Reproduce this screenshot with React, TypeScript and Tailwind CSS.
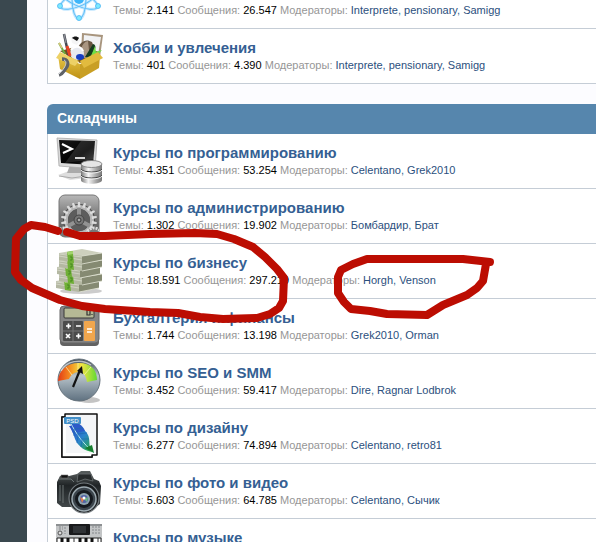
import React from "react";

type Forum = {
  title: string;
  topics: string;
  posts: string;
  mods: string[];
  icon: React.ReactNode;
};

const AtomIcon = () => (
  <svg viewBox="0 0 48 48" className="h-12 w-12" fill="none" aria-hidden="true">
    <g stroke="#c3e8ff" strokeWidth="3">
      <ellipse cx="24" cy="22" rx="7" ry="20" />
      <ellipse cx="24" cy="22" rx="7" ry="20" transform="rotate(66 24 22)" />
      <ellipse cx="24" cy="22" rx="7" ry="20" transform="rotate(-66 24 22)" />
    </g>
    <g stroke="#5cbcf7" strokeWidth="1">
      <ellipse cx="24" cy="22" rx="7" ry="20" />
      <ellipse cx="24" cy="22" rx="7" ry="20" transform="rotate(66 24 22)" />
      <ellipse cx="24" cy="22" rx="7" ry="20" transform="rotate(-66 24 22)" />
    </g>
    <circle cx="24" cy="22" r="5" fill="#3fb6fa" />
    <g fill="#7deaff" stroke="#4ab4f2" strokeWidth="0.8">
      <circle cx="24" cy="41" r="2.5" />
      <circle cx="5" cy="29" r="2.5" />
      <circle cx="43" cy="29" r="2.5" />
    </g>
  </svg>
);

const BoxIcon = () => (
  <svg viewBox="0 0 48 48" className="h-12 w-12" aria-hidden="true">
    <defs>
      <linearGradient id="boxFront" x1="0" y1="0" x2="0" y2="1">
        <stop offset="0" stopColor="#e9c94a" />
        <stop offset="1" stopColor="#bd8f13" />
      </linearGradient>
    </defs>
    <path d="M27 1 48 3 45 25 26 23z" fill="#a8957e" />
    <path d="M29 3 46 5 43 23 28 21z" fill="#f1f2f4" />
    <path d="M5 19 24 14 44 20 25 31z" fill="#76541b" />
    <path d="M23 17c1-7 8-11 14-7l2 5-12 10z" fill="#685642" />
    <path d="M33 9c-7 1-9 12-4 17l6 1z" fill="#a99580" />
    <path d="M30 25 38 12c2 0 3 3 2 5l-6 9z" fill="#163d20" />
    <path d="M36 24 40 14l1 6 6-2-7 8z" fill="#6ee047" />
    <circle cx="22" cy="21" r="7" fill="#e7e9ef" />
    <path d="M16 18c3-5 10-4 12 1" fill="none" stroke="#fff" strokeWidth="2" />
    <ellipse cx="25" cy="25" rx="4" ry="3" fill="#173dc1" />
    <path d="M16 6c2-3 6-3 8 0l1 3-3 4-5-2z" fill="#f5f5f5" />
    <path d="M17 6c2-2 5-2 7 0l-2 3z" fill="#151515" />
    <path d="M9 2 14 25" stroke="#434750" strokeWidth="2.5" />
    <path d="M9 2 11 11" stroke="#8a8d94" strokeWidth="1.2" />
    <path d="M12 14 15 24" stroke="#e94222" strokeWidth="3" />
    <path d="M4 11 10 22" stroke="#6bae45" strokeWidth="2" />
    <path d="M4 11 7 16" stroke="#dbc37b" strokeWidth="1.5" />
    <path d="M3 23 25 32 25 47 5 37z" fill="url(#boxFront)" />
    <path d="M25 32 45 24 44 36 25 47z" fill="#c99f24" />
    <path d="M1 26 5 20 24 29 20 34z" fill="#edd166" />
    <path d="M25 29 43 20 48 26 29 36z" fill="#e2bb3e" />
    <path d="M7 27c6 0 7 5 4 9s-3 6-7 7" fill="none" stroke="#5f6267" strokeWidth="3.5" />
    <path d="M9 28c3 1 2 5 0 8s-3 4-5 6" fill="none" stroke="#d1d3d5" strokeWidth="1" />
  </svg>
);

const TerminalIcon = () => (
  <svg viewBox="0 0 48 48" className="h-12 w-12" aria-hidden="true">
    <defs>
      <linearGradient id="dbMetal">
        <stop offset="0" stopColor="#777" />
        <stop offset="0.35" stopColor="#f6f6f6" />
        <stop offset="0.7" stopColor="#aaa" />
        <stop offset="1" stopColor="#777" />
      </linearGradient>
      <linearGradient id="termScreen" x1="0" y1="0" x2="1" y2="1">
        <stop offset="0.2" stopColor="#111" />
        <stop offset="0.6" stopColor="#000" />
        <stop offset="1" stopColor="#333" />
      </linearGradient>
    </defs>
    <path d="M3 38 17 33 31 34 32 41 15 43z" fill="#ddd" />
    <path d="M4 39 17 41 31 39" fill="none" stroke="#aaa" />
    <path d="M15 28h12l2 8H12z" fill="#aaa" />
    <path d="M2 1 42 3 40 32 4 29z" fill="#d9d9d9" stroke="#aaa" strokeWidth="0.8" />
    <path d="M4 3 40 4 38 28 6 26z" fill="url(#termScreen)" />
    <path d="M26 4 40 4 39 22 10 26z" fill="#fff" opacity="0.12" />
    <path d="m7 7 10 5-9 4" fill="none" stroke="#fff" strokeWidth="2" />
    <path d="M20 21h10" stroke="#fff" strokeWidth="1.6" />
    <path d="M26 27v16c0 5 21 5 21 0V27z" fill="url(#dbMetal)" />
    <path d="M26 32c2 4 19 4 21 0M26 38c2 4 19 4 21 0" fill="none" stroke="#444" />
    <path d="M26 33c2 4 19 4 21 0M26 39c2 4 19 4 21 0" fill="none" stroke="#fff" strokeWidth="0.8" />
    <ellipse cx="36.5" cy="27" rx="10.5" ry="3.5" fill="#e5e5e5" stroke="#777" strokeWidth="0.8" />
  </svg>
);

const teeth = [0, 20, 40, 60, 80, 100, 120, 140, 160, 180, 200, 220, 240, 260, 280, 300, 320, 340];

const GearIcon = () => (
  <svg viewBox="0 0 48 48" className="h-12 w-12" aria-hidden="true">
    <defs>
      <linearGradient id="gearBg" x1="0" y1="0" x2="0" y2="1">
        <stop offset="0" stopColor="#b8b8b8" />
        <stop offset="0.5" stopColor="#777" />
        <stop offset="1" stopColor="#555" />
      </linearGradient>
      <clipPath id="gearClip">
        <rect x="4" y="3" width="40" height="42" rx="6" />
      </clipPath>
    </defs>
    <rect x="4" y="3" width="40" height="42" rx="6" fill="url(#gearBg)" stroke="#777" />
    <g clipPath="url(#gearClip)">
      <circle cx="24" cy="28" r="16" fill="#4a4a4a" />
      <circle cx="24" cy="28" r="13" fill="none" stroke="#b5b5b5" strokeWidth="4" />
      {teeth.map((a) => (
        <path key={a} d="M22.5 15 23 10h2l.5 5z" fill="#dcdcdc" transform={`rotate(${a} 24 28)`} />
      ))}
      <circle cx="24" cy="28" r="11" fill="#5c5c5c" />
      <path d="M24 28V16M24 28 13 34M24 28 35 34" stroke="#929292" strokeWidth="4" />
      <circle cx="24" cy="28" r="5" fill="#777" stroke="#444" />
      <circle cx="24" cy="28" r="2" fill="#aaa" stroke="#333" />
      <g fill="#777" stroke="#ddd" strokeWidth="3">
        <circle cx="9" cy="44" r="8" strokeDasharray="2 1" />
        <circle cx="39" cy="44" r="8" strokeDasharray="2 1" />
      </g>
    </g>
  </svg>
);

const bundles = [
  { x: 0, y: 30 },
  { x: 3, y: 23 },
  { x: 1, y: 16 },
  { x: 3, y: 9 },
  { x: 3, y: 2 },
];

const MoneyIcon = () => (
  <svg viewBox="0 0 48 48" className="h-12 w-12" aria-hidden="true">
    <ellipse cx="26" cy="44" rx="21" ry="3" fill="#ccc" />
    {bundles.map(({ x, y }) => (
      <g key={y} transform={`translate(${x} ${y})`}>
        <path d="M1 4 24 0 44 4 24 8z" fill="#cdd0bd" />
        <path d="M1 4 24 7v8L1 11z" fill="#b4b8a2" />
        <path d="M1 5 24 8M1 7l23 4" stroke="#d8dacb" strokeWidth="0.8" fill="none" />
        <path d="M24 7 44 4v7l-20 4z" fill="#858a72" />
        <path d="M24 7 44 4M24 15l20-4" stroke="#e2e4d6" strokeWidth="0.8" />
        <path d="m9 3 6-1v3l1 9-6-1z" fill="#6faf36" />
        <path d="m9 3 6-1v3l-5 1z" fill="#a2d36d" />
        <path d="M12 8h2v3h-2" fill="none" stroke="#3f8420" strokeWidth="0.8" />
      </g>
    ))}
  </svg>
);

const CalculatorIcon = () => (
  <svg viewBox="0 0 48 48" className="h-12 w-12" aria-hidden="true">
    <rect x="5" y="5" width="39" height="39" rx="4" fill="#626262" />
    <rect x="5" y="4" width="39" height="37" rx="4" fill="#858585" stroke="#666" />
    <rect x="9" y="6" width="30" height="10" rx="1" fill="#b5b995" stroke="#383838" />
    <path d="M32 8h3v5h-3zM37 12v1" fill="none" stroke="#333" strokeWidth="1.2" />
    <rect x="8" y="19" width="20" height="20" rx="1" fill="#4b4b4b" />
    <rect x="29" y="19" width="11" height="20" rx="1" fill="#f1a64d" />
    <path d="M18 19v20M8 29h20" stroke="#777" />
    <path
      d="M11 24h5M13.500 21.500v5M21 24h5M11 32l4 4M15 32l-4 4M21 34h5M23.500 31.500v5M32 27h5M32 30h5"
      stroke="#fff"
      strokeWidth="1.6"
    />
  </svg>
);

const GaugeIcon = () => (
  <svg viewBox="0 0 48 48" className="h-12 w-12" aria-hidden="true">
    <defs>
      <linearGradient id="gaugeBody" x1="0" y1="0" x2="0" y2="1">
        <stop offset="0" stopColor="#3d474f" />
        <stop offset="0.4" stopColor="#b9c4cb" />
        <stop offset="0.7" stopColor="#8a99a4" />
        <stop offset="1" stopColor="#5f7180" />
      </linearGradient>
      <linearGradient id="gaugeScale">
        <stop offset="0" stopColor="#e23a17" />
        <stop offset="0.3" stopColor="#f58b1f" />
        <stop offset="0.6" stopColor="#f3e544" />
        <stop offset="1" stopColor="#62d932" />
      </linearGradient>
    </defs>
    <ellipse cx="34" cy="43" rx="11" ry="3" fill="#c4c4c4" />
    <circle cx="24" cy="23" r="21" fill="url(#gaugeBody)" stroke="#65727c" />
    <path d="M3 24C4 13 12 6 24 6s18 7 18 17l-10 2c-1-7-4-10-8-10-5 0-8 3-10 7z" fill="url(#gaugeScale)" />
    <path d="M11 10 17 18M23 6v9M36 10l-7 8" stroke="#fff8b0" strokeWidth="0.7" />
    <path d="M6 14C11 4 26 1 36 8" fill="none" stroke="#fff" strokeWidth="1.5" opacity="0.6" />
    <path d="M18 30 25 13" stroke="#111" strokeWidth="2.2" />
    <path d="m27 9-5 5 6 3z" fill="#111" />
  </svg>
);

const PsdIcon = () => (
  <svg viewBox="0 0 48 48" className="h-12 w-12" aria-hidden="true">
    <defs>
      <linearGradient id="feather" x1="0" y1="0" x2="1" y2="1">
        <stop offset="0.1" stopColor="#2850c8" />
        <stop offset="0.5" stopColor="#2b83cd" />
        <stop offset="0.9" stopColor="#29a949" />
      </linearGradient>
    </defs>
    <path d="M7 5h30v40H7z" fill="#fff" stroke="#111" strokeWidth="1.5" />
    <path d="M10 2h32v41H37v2H7V5h3z" fill="#fff" stroke="#111" strokeWidth="1.5" strokeLinejoin="round" />
    <path d="M11 3h30v38H11z" fill="#f4f5f7" />
    <path d="M14 14c8 0 16 2 19 9 2 4 1 9 2 12l3 5c-8-1-14-5-17-11-2-4-3-10-7-15z" fill="url(#feather)" />
    <path d="M16 9c5 0 12 4 14 10l-12 2c-2-4-3-8-2-12z" fill="#2c5bc8" />
    <path d="M15 10c7 13 12 20 24 31" fill="none" stroke="#b9ebec" strokeWidth="1" />
    <path d="m19 17 9-1M22 22l10-1M26 27l8 0M19 17l0 7M23 23l-1 8M27 28l-1 7" stroke="#1c6bb0" strokeWidth="0.7" />
    <path d="M30 36 37 33l2 8z" fill="#187e30" />
    <rect x="9" y="5" width="17" height="7" rx="1" fill="#438fc8" />
    <text x="17.5" y="11" textAnchor="middle" fill="#fff" fontSize="6" fontFamily="Liberation Sans, sans-serif">
      PSD
    </text>
  </svg>
);

const CameraIcon = () => (
  <svg viewBox="0 0 48 48" className="h-12 w-12" aria-hidden="true">
    <defs>
      <linearGradient id="camBody" x1="0" y1="0" x2="0" y2="1">
        <stop offset="0" stopColor="#5a6060" />
        <stop offset="0.4" stopColor="#202426" />
        <stop offset="1" stopColor="#414749" />
      </linearGradient>
    </defs>
    <path d="M2 15 5 9h9l8-2 4-3h9l4 8 5 2 2 5-1 18-4 3H7l-5-4z" fill="url(#camBody)" />
    <path d="M23 7h13l2 7-8-2-8 3z" fill="#272b2c" stroke="#6c7273" strokeWidth="0.8" />
    <path d="M4 12h12l3 3M5 18v16M8 18v18" fill="none" stroke="#6c7475" strokeWidth="1" />
    <path d="M6 8h7v3H6z" fill="#111" stroke="#777" strokeWidth="0.6" />
    <circle cx="29" cy="31" r="15" fill="#171a1c" stroke="#747b7f" strokeWidth="1.2" />
    <circle cx="29" cy="32" r="12" fill="#3c454c" stroke="#9eabb2" strokeWidth="1.5" />
    <circle cx="29" cy="32" r="9" fill="#15191e" />
    <circle cx="29" cy="32" r="6" fill="#8da3af" />
    <circle cx="29" cy="32" r="4" fill="#5365a5" />
    <path d="M25 30 29 32 27 36z" fill="#dd7e4d" />
    <path d="M29 32 33 30 32 35z" fill="#6cb77d" />
    <circle cx="29" cy="31" r="1.5" fill="#fff" />
  </svg>
);

const KeyboardIcon = () => (
  <svg viewBox="0 0 48 48" className="h-12 w-12" aria-hidden="true">
    <path d="M1 2h46v42H1z" fill="#c3c5c6" />
    <path d="M1 2h46v2H1z" fill="#8d9092" />
    <rect x="14" y="2" width="21" height="11" rx="1" fill="#191a1c" />
    <rect x="18" y="4" width="13" height="7" fill="#303336" />
    <circle cx="5" cy="11" r="2" fill="#ddd" stroke="#555" />
    <path d="M4 5h4M4 7h4M10 5v7M37 5h8M37 8h8M37 11h8" stroke="#85888b" strokeDasharray="2 1" />
    <path d="M2 16h44v28H2z" fill="#fff" stroke="#222" />
    <path d="M7 16v28M13 16v28M19 16v28M25 16v28M31 16v28M37 16v28M43 16v28" stroke="#333" />
    <path d="M7 16v15M13 16v15M25 16v15M31 16v15M37 16v15" stroke="#111" strokeWidth="3" />
  </svg>
);

const general: Forum[] = [
  {
    title: "Техника и связь",
    topics: "2.141",
    posts: "26.547",
    mods: ["Interprete", "pensionary", "Samigg"],
    icon: <AtomIcon />,
  },
  {
    title: "Хобби и увлечения",
    topics: "401",
    posts: "4.390",
    mods: ["Interprete", "pensionary", "Samigg"],
    icon: <BoxIcon />,
  },
];

const courses: Forum[] = [
  { title: "Курсы по программированию", topics: "4.351", posts: "53.254", mods: ["Celentano", "Grek2010"], icon: <TerminalIcon /> },
  { title: "Курсы по администрированию", topics: "1.302", posts: "19.902", mods: ["Бомбардир", "Брат"], icon: <GearIcon /> },
  { title: "Курсы по бизнесу", topics: "18.591", posts: "297.219", mods: ["Horgh", "Venson"], icon: <MoneyIcon /> },
  { title: "Бухгалтерия и финансы", topics: "1.744", posts: "13.198", mods: ["Grek2010", "Orman"], icon: <CalculatorIcon /> },
  { title: "Курсы по SEO и SMM", topics: "3.452", posts: "59.417", mods: ["Dire", "Ragnar Lodbrok"], icon: <GaugeIcon /> },
  { title: "Курсы по дизайну", topics: "6.277", posts: "74.894", mods: ["Celentano", "retro81"], icon: <PsdIcon /> },
  { title: "Курсы по фото и видео", topics: "5.603", posts: "64.785", mods: ["Celentano", "Сычик"], icon: <CameraIcon /> },
];

const ForumTitle = ({ title }: { title: string }) => (
  <h3 className="text-[15px] font-bold leading-[18px]">
    <a href="#forum" className="text-[#355f93]">{title}</a>
  </h3>
);

const ForumRow = ({ forum }: { forum: Forum }) => (
  <li className="flex h-[55px] gap-[10px] border-b border-[#c5cdd6] pl-[7px] pt-[3px]">
    <div className="shrink-0">{forum.icon}</div>
    <div className="min-w-0 whitespace-nowrap pt-[7px]">
      <ForumTitle title={forum.title} />
      <p className="text-[11px] leading-[16px] text-[#969696]">
        Темы: <span className="text-black">{forum.topics}</span> Сообщения:{" "}
        <span className="text-black">{forum.posts}</span> Модераторы:{" "}
        {forum.mods.map((mod, i) => (
          <React.Fragment key={mod}>
            {i > 0 && <span className="text-[#355f93]">, </span>}
            <a href="#member" className="text-[#2b4f7d]">{mod}</a>
          </React.Fragment>
        ))}
      </p>
    </div>
  </li>
);

const ForumList = ({ forums, children }: { forums: Forum[]; children?: React.ReactNode }) => (
  <ul className="border-l border-[#c5cdd6] bg-white">
    {forums.map((forum) => (
      <ForumRow key={forum.title} forum={forum} />
    ))}
    {children}
  </ul>
);

const Markup = () => (
  <svg
    className="pointer-events-none absolute left-0 top-0"
    width="596"
    height="542"
    viewBox="0 0 596 542"
    fill="none"
    stroke="#bc0d02"
    strokeWidth="8"
    strokeLinecap="round"
    strokeLinejoin="round"
    aria-hidden="true"
  >
    <path d="M58 231 45 227 31 225 24 229 16 239 15 272 21 280 32 288 60 300 82 306 105 309 150 312 178 313 200 317 223 319 257 318 270 314 279 308 283 301 284 278 277 269 265 257 253 247 234 239 217 234 195 233 150 234 105 236 80 236 67 232" />
    <path d="M490 262 463 259 367 259 353 264 341 270 338 277 338 293 344 302 351 309 370 311 387 314 427 315 443 305 467 295 477 288 483 281 486 264" />
  </svg>
);

export default function App() {
  return (
    <div className="relative flex h-screen overflow-hidden bg-[#fcfcff] font-['Liberation_Sans',Arial,sans-serif]">
      <div className="w-[27px] shrink-0 bg-[#3a484f]" />
      <main className="min-w-0 flex-1 pl-5">
        {/* list is scrolled part of the way past its first row */}
        <section className="-mt-[26px]">
          <ForumList forums={general} />
        </section>
        <section className="mt-5">
          <h2 className="h-[30px] rounded-tl-md bg-[#5686ad] pl-[10px] text-[14px] font-bold leading-[29px] text-white">
            Складчины
          </h2>
          <ForumList forums={courses}>
            <li className="flex h-[55px] gap-[10px] pl-[7px] pt-[3px]">
              <div className="shrink-0">
                <KeyboardIcon />
              </div>
              <div className="pt-[7px]">
                <ForumTitle title="Курсы по музыке" />
              </div>
            </li>
          </ForumList>
        </section>
      </main>
      <Markup />
    </div>
  );
}
